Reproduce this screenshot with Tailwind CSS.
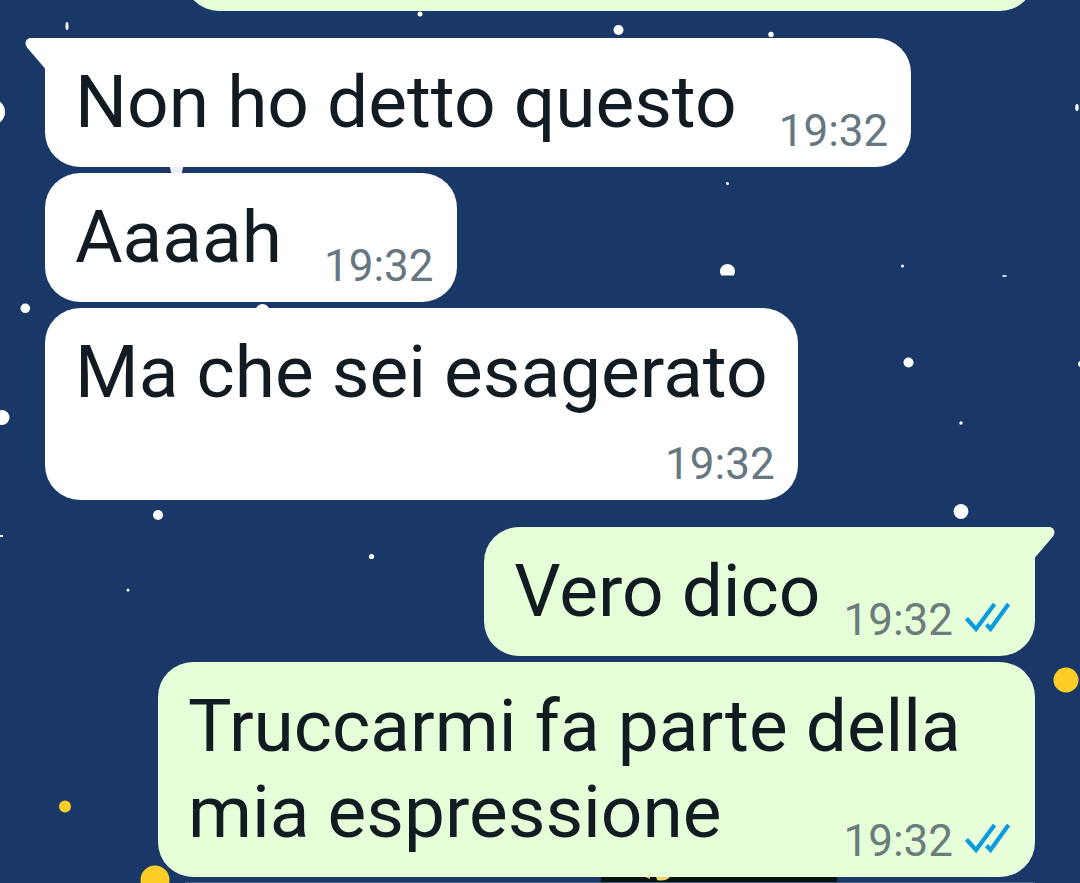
<!DOCTYPE html>
<html lang="it">
<head>
  <meta charset="UTF-8" />
  <meta name="viewport" content="width=device-width, initial-scale=1.0" />
  <title>Chat</title>
  <script src="https://cdn.jsdelivr.net/npm/@tailwindcss/browser@4"></script>
</head>
<body class="bg-[#193868] text-[#111b21] font-['Roboto',sans-serif]">
  <main class="relative h-screen overflow-hidden">

    <!-- Starry wallpaper -->
    <svg class="absolute top-0 left-0 w-full h-full overflow-visible" fill="#fff" aria-hidden="true">
      <ellipse cx="67" cy="26" rx="1.5" ry="4" />
      <circle cx="420" cy="14" r="2.5" />
      <circle cx="618.5" cy="30" r="5" />
      <circle cx="771" cy="34.5" r="2.7" />
      <circle cx="-8" cy="112" r="13" />
      <ellipse cx="1077" cy="107.5" rx="1.7" ry="3.5" />
      <path d="M169.5 166h14l-2 8h-10z" fill="#eef0f8" />
      <circle cx="727.5" cy="183.5" r="1.5" />
      <path d="M721.2 275.5a7.5 7.5 0 1 1 12.6 0z" />
      <circle cx="902.5" cy="266" r="1.5" />
      <path d="M1002.5 275h4v2h-4z" fill="#b8e6ee" />
      <circle cx="25.3" cy="308.3" r="4.8" />
      <circle cx="262.5" cy="311" r="7" />
      <circle cx="908.5" cy="362.5" r="5" />
      <circle cx="1081" cy="364" r="3" />
      <circle cx="2" cy="417.5" r="7.5" />
      <circle cx="961" cy="423" r="1.7" />
      <circle cx="961" cy="511.5" r="7.4" />
      <circle cx="158" cy="515" r="5" />
      <path d="M0 535h3v2H0z" />
      <circle cx="371.5" cy="556.5" r="2.6" />
      <circle cx="128" cy="590" r="1.5" />
      <g fill="#fdcf26">
        <circle cx="1066" cy="680" r="12.5" />
        <circle cx="65" cy="806.5" r="6" />
        <circle cx="155" cy="880" r="14.5" />
      </g>
      <path d="M601 870h236v13H601z" fill="#07130a" />
      <path d="M643 876h7v3zM656 876h15q-5 6-14 4z" fill="#f0d468" />
    </svg>

    <div class="relative flex flex-col px-[45px]">

      <!-- Previous message, scrolled almost out of view -->
      <div class="flex items-end justify-end h-[11px] overflow-hidden">
        <div class="shrink-0 w-[851px] h-[129px] rounded-[35px] bg-[#e7ffd9]"></div>
      </div>

      <!-- Received -->
      <section class="flex flex-col items-start gap-[6px] mt-[27px]">
        <article class="relative flex items-end rounded-[35px] rounded-tl-none bg-white">
          <svg class="absolute top-0 -left-5 w-[21px] h-[31px]" viewBox="0 0 21 31" fill="#fff" aria-hidden="true">
            <path d="M21 0H6C1 0-1 5 2 9.5L20 30.5h1z" />
          </svg>
          <p class="pl-[30px] pt-[21px] pb-[22px] text-[73px] leading-[86px]">Non ho detto questo</p>
          <time class="ml-[42px] mr-[23px] mb-[10px] text-[44px] leading-[52px] text-[#667781]">19:32</time>
        </article>

        <article class="flex items-end rounded-[35px] bg-white">
          <p class="pl-[30px] pt-[21px] pb-[22px] text-[73px] leading-[86px]">Aaaah</p>
          <time class="ml-[42px] mr-[23px] mb-[10px] text-[44px] leading-[52px] text-[#667781]">19:32</time>
        </article>

        <article class="flex flex-col rounded-[35px] bg-white">
          <p class="px-[30px] pt-[21px] pb-[23px] text-[73px] leading-[86px]">Ma che sei esagerato</p>
          <time class="self-end mr-[23px] mb-[10px] text-[44px] leading-[52px] text-[#667781]">19:32</time>
        </article>
      </section>

      <!-- Sent -->
      <section class="flex flex-col items-end gap-[6px] mt-[27px]">
        <article class="relative flex items-end rounded-[35px] rounded-tr-none bg-[#e7ffd9]">
          <svg class="absolute top-0 -right-5 w-[21px] h-[31px]" viewBox="0 0 21 31" fill="#e7ffd9" aria-hidden="true">
            <path d="M0 0h15c5 0 7 5 4 9.5L1 30.5H0z" />
          </svg>
          <p class="pl-[30px] pt-[21px] pb-[22px] text-[73px] leading-[86px]">Vero dico</p>
          <div class="flex items-center gap-3 ml-[23px] mr-6 mb-[10px] text-[44px] leading-[52px] text-[#6b7c7c]">
            <time>19:32</time>
            <svg class="w-[46px] h-9" viewBox="0 0 46 36" fill="none" stroke="#0b9be0" stroke-width="4.2" role="img" aria-label="Letto">
              <path d="M1.5 16.5l9.5 10.5L29.5 2M21.500 22.500l4 4.500L43.500 2" />
            </svg>
          </div>
        </article>

        <article class="grid max-w-[877px] rounded-[35px] bg-[#e7ffd9]">
          <p class="col-start-1 row-start-1 px-[30px] pt-[21px] pb-[22px] text-[73px] leading-[86px]">Truccarmi fa parte della mia espressione</p>
          <div class="col-start-1 row-start-1 self-end justify-self-end flex items-center gap-3 mr-6 mb-[10px] text-[44px] leading-[52px] text-[#6b7c7c]">
            <time>19:32</time>
            <svg class="w-[46px] h-9" viewBox="0 0 46 36" fill="none" stroke="#0b9be0" stroke-width="4.2" role="img" aria-label="Letto">
              <path d="M1.5 16.5l9.5 10.5L29.5 2M21.500 22.500l4 4.500L43.500 2" />
            </svg>
          </div>
        </article>
      </section>

      <!-- Top edge of the next message -->
      <div class="self-end w-[850px] h-5 mt-[5px] border-t border-[#45608a] bg-[#e7ffd9]"></div>
    </div>
  </main>
</body>
</html>
